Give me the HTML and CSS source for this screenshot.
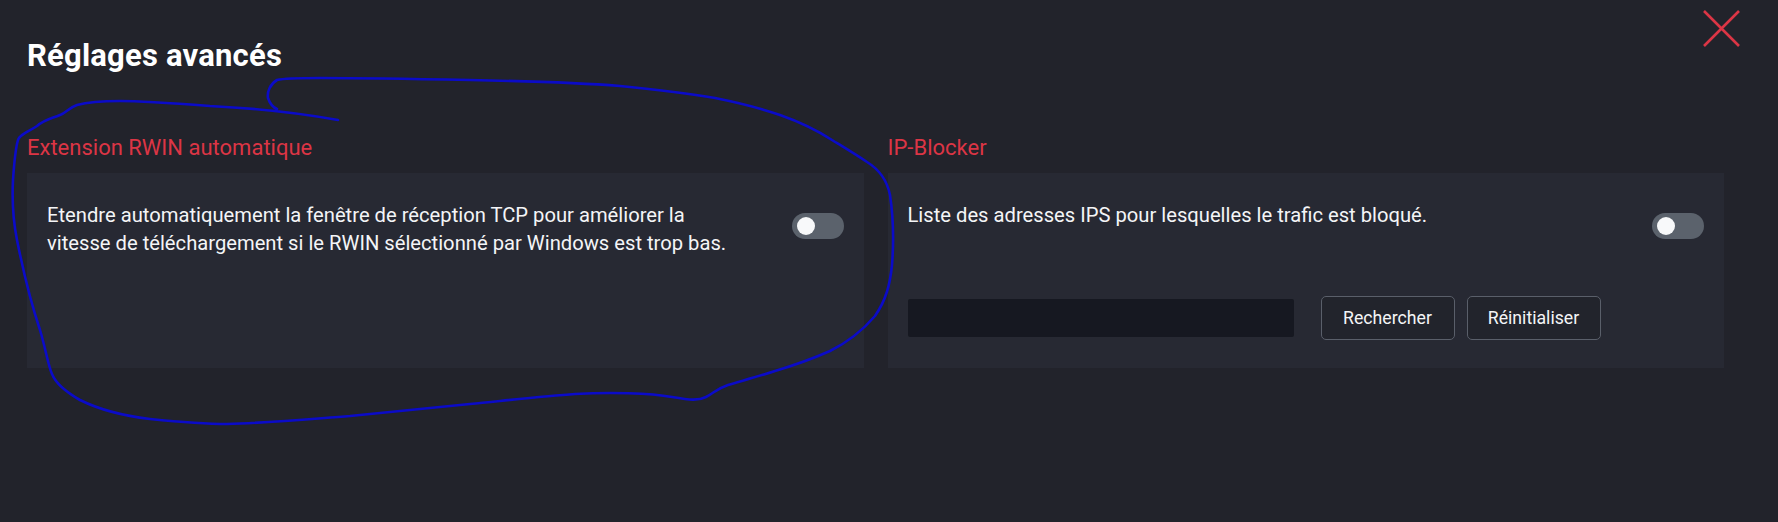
FILE: index.html
```html
<!DOCTYPE html>
<html lang="fr">
<head>
<meta charset="utf-8">
<title>Réglages avancés</title>
<link rel="stylesheet" href="styles.css">
</head>
<body>
<div class="page">
  <header class="header">
    <h1 class="title">Réglages avancés</h1>
    <button class="close" aria-label="Fermer">
      <svg width="37" height="37" viewBox="0 0 37 37"><path d="M1 1 L36 36 M36 1 L1 36" stroke="#dc3545" stroke-width="2.6" fill="none"/></svg>
    </button>
  </header>

  <main class="grid">
    <section class="section">
      <h2 class="section-title">Extension RWIN automatique</h2>
      <div class="card">
        <div class="row">
          <p class="desc desc-wrap">Etendre automatiquement la fenêtre de réception TCP pour améliorer la vitesse de téléchargement si le RWIN sélectionné par Windows est trop bas.</p>
          <span class="switch"><span class="knob"></span></span>
        </div>
      </div>
    </section>

    <section class="section">
      <h2 class="section-title">IP-Blocker</h2>
      <div class="card">
        <div class="row">
          <p class="desc">Liste des adresses IPS pour lesquelles le trafic est bloqué.</p>
          <span class="switch"><span class="knob"></span></span>
        </div>
        <div class="controls">
          <input class="ip-input" type="text">
          <button class="btn btn-first">Rechercher</button>
          <button class="btn">Réinitialiser</button>
        </div>
      </div>
    </section>
  </main>

  <svg class="scribble" width="1778" height="522" viewBox="0 0 1778 522">
    <path d="M338 120 C300 113 250 108 210 106 C170 103 140 101 120 101 C100 101 88 102 77 105 C68 108 66 113 60 115 C50 119 44 120 37 126 C28 132 20 134 18 140 C15 150 14 165 13 180 C12 200 14 225 17 240 C22 265 30 300 40 330 C46 350 48 365 52 374 C56 384 66 392 80 400 C100 410 125 416 150 419 C180 422 205 424 227 424 C270 423 310 419 350 416 C390 412 430 408 470 404 C510 400 545 396 575 394 C610 392 650 393 672 397 C690 400 698 401 706 397 C714 393 716 389 728 385 C745 380 760 376 775 371 C795 365 812 359 830 351 C848 342 863 330 875 316 C886 300 890 285 892 265 C894 240 893 215 890 195 C887 180 880 170 867 162 C855 154 845 148 832 140 C815 129 800 122 780 115 C760 108 740 103 715 98 C680 92 650 89 620 86 C570 82 520 81 470 80 C420 79 370 78 320 78 C300 78 285 78 277 80 C270 84 267 92 268 98 C270 104 272 107 277 109" fill="none" stroke="#0b0bc8" stroke-width="2.6" stroke-linecap="round" stroke-linejoin="round"/>
  </svg>
</div>
</body>
</html>
```

FILE: styles.css
```css
* { box-sizing: border-box; }

html, body {
  margin: 0;
  padding: 0;
  background: #22232b;
}

body {
  font-family: Roboto, "Noto Sans", "Liberation Sans", sans-serif;
  color: #f4f5f7;
  height: 522px;
  overflow: hidden;
}

.page {
  position: relative;
  height: 522px;
}

.header {
  display: flex;
  justify-content: space-between;
  align-items: flex-start;
  padding: 0 38px 0 27px;
}

.title {
  margin: 38px 0 0;
  font-size: 31px;
  line-height: 36px;
  font-weight: 700;
  color: #ffffff;
  letter-spacing: 0.2px;
}

.close {
  margin-top: 10px;
  padding: 0;
  border: 0;
  background: transparent;
  width: 37px;
  height: 37px;
  display: block;
}

.close svg { display: block; }

.grid {
  display: grid;
  grid-template-columns: 1fr 1fr;
  column-gap: 24px;
  padding: 0 54px 0 27px;
  margin-top: 61px;
}

.section {
  display: flex;
  flex-direction: column;
}

.section-title {
  margin: 0 0 12px;
  font-size: 22px;
  line-height: 26px;
  font-weight: 400;
  color: #dc3545;
}

.card {
  flex: 1;
  background: #272933;
  padding: 28px 20px 28px 20px;
}

.row {
  display: flex;
  justify-content: space-between;
  align-items: flex-start;
  gap: 24px;
}

.desc {
  margin: 0;
  font-size: 20.2px;
  line-height: 28px;
  color: #f4f5f7;
}

.desc-wrap {
  max-width: 700px;
}

.switch {
  flex: none;
  margin-top: 12px;
  width: 52px;
  height: 26px;
  border-radius: 13px;
  background: #5b626c;
  display: flex;
  align-items: center;
  padding-left: 5px;
}

.knob {
  width: 18px;
  height: 18px;
  border-radius: 50%;
  background: #f8f9fa;
}

.controls {
  display: flex;
  align-items: center;
  margin-top: 57px;
}

.ip-input {
  width: 386px;
  height: 38px;
  border: 0;
  border-radius: 2px;
  background: #161821;
  margin-right: 27px;
}

.btn {
  width: 134px;
  height: 44px;
  border: 1.5px solid #5a5f6a;
  border-radius: 5px;
  background: #22242c;
  color: #f4f5f7;
  font-family: Roboto, "Noto Sans", sans-serif;
  font-size: 17.7px;
}

.btn-first { margin-right: 12px; }

.scribble {
  position: absolute;
  left: 0;
  top: 0;
  pointer-events: none;
}
```
